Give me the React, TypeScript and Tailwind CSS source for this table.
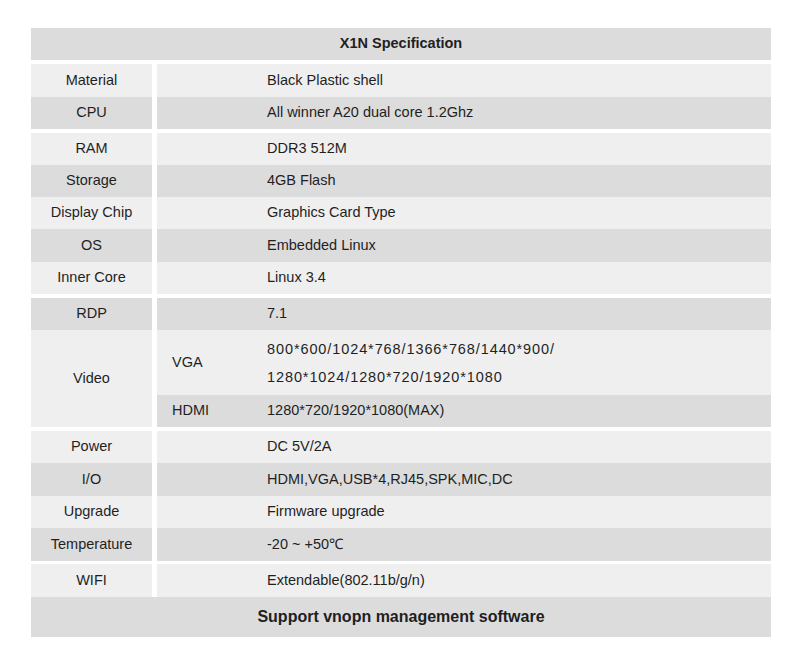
import React from "react";

type Row = { label: string; value: string; h: string; dark: boolean };

const groups: Row[][] = [
  [
    { label: "Material", value: "Black Plastic shell", h: "h-[33px]", dark: false },
    { label: "CPU", value: "All winner A20 dual core 1.2Ghz", h: "h-[32px]", dark: true },
  ],
  [
    { label: "RAM", value: "DDR3 512M", h: "h-[32px]", dark: false },
    { label: "Storage", value: "4GB Flash", h: "h-[32px]", dark: true },
    { label: "Display Chip", value: "Graphics Card Type", h: "h-[32px]", dark: false },
    { label: "OS", value: "Embedded Linux", h: "h-[33px]", dark: true },
    { label: "Inner Core", value: "Linux 3.4", h: "h-[32px]", dark: false },
  ],
];

const lower: Row[] = [
  { label: "Power", value: "DC 5V/2A", h: "h-[32px]", dark: false },
  { label: "I/O", value: "HDMI,VGA,USB*4,RJ45,SPK,MIC,DC", h: "h-[33px]", dark: true },
  { label: "Upgrade", value: "Firmware upgrade", h: "h-[32px]", dark: false },
  { label: "Temperature", value: "-20 ~ +50℃", h: "h-[33px]", dark: true },
];

const SpecRow = ({ row }: { row: Row }) => {
  const bg = row.dark ? "bg-[#dcdcdc]" : "bg-[#efeff0]";
  return (
    <div className={`flex ${row.h}`}>
      <div className={`w-[121px] flex items-center justify-center ${bg}`}>{row.label}</div>
      <div className="w-[5px] bg-white" />
      <div className={`flex-1 flex items-center pl-[110px] ${bg}`}>{row.value}</div>
    </div>
  );
};

export default function App() {
  return (
    <div
      className="w-[790px] h-[654px] bg-white pt-[28px] pl-[31px] text-[14.5px] text-[#1f1f1f]"
      style={{ fontFamily: '"Liberation Sans", Arial, sans-serif' }}
    >
      <div className="w-[740px] flex flex-col">
        <div className="h-[32px] bg-[#dcdcdc] flex items-center justify-center font-bold">
          X1N Specification
        </div>

        {groups.map((g, i) => (
          <div key={i} className="mt-[4px] flex flex-col">
            {g.map((r) => (
              <SpecRow key={r.label} row={r} />
            ))}
          </div>
        ))}

        <div className="mt-[4px] flex flex-col">
          <SpecRow row={{ label: "RDP", value: "7.1", h: "h-[32px]", dark: true }} />
          <div className="flex h-[97px]">
            <div className="w-[121px] flex items-center justify-center bg-[#efeff0]">Video</div>
            <div className="w-[5px] bg-white" />
            <div className="flex-1 flex flex-col">
              <div className="h-[65px] flex items-center bg-[#efeff0]">
                <div className="w-[110px] pl-[15px]">VGA</div>
                <div className="flex flex-col leading-[28px] tracking-[0.9px]">
                  <span>800*600/1024*768/1366*768/1440*900/</span>
                  <span>1280*1024/1280*720/1920*1080</span>
                </div>
              </div>
              <div className="h-[32px] flex items-center bg-[#dcdcdc]">
                <div className="w-[110px] pl-[15px]">HDMI</div>
                <div>1280*720/1920*1080(MAX)</div>
              </div>
            </div>
          </div>
        </div>

        <div className="mt-[4px] flex flex-col">
          {lower.map((r) => (
            <SpecRow key={r.label} row={r} />
          ))}
        </div>

        <div className="mt-[3px] flex flex-col">
          <SpecRow row={{ label: "WIFI", value: "Extendable(802.11b/g/n)", h: "h-[33px]", dark: false }} />
          <div className="h-[40px] bg-[#dcdcdc] flex items-center justify-center font-bold text-[16px]">
            Support vnopn management software
          </div>
        </div>
      </div>
    </div>
  );
}
